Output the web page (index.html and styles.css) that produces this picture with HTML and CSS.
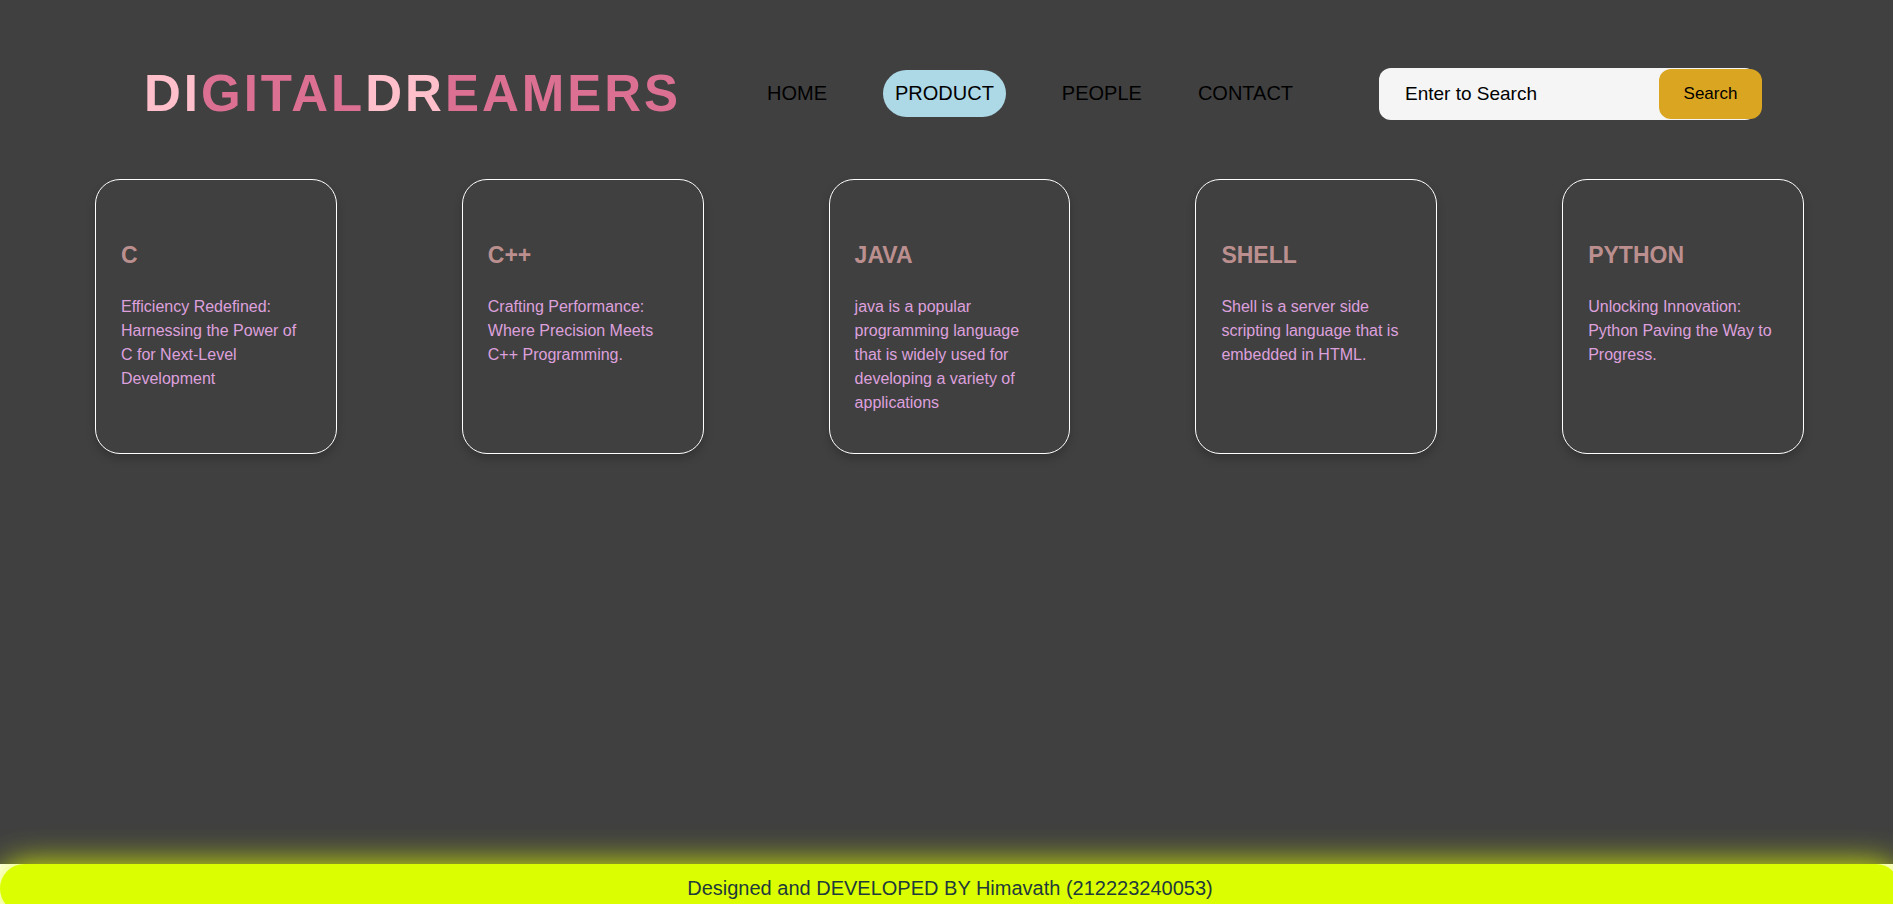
FILE: index.html
```html
<!DOCTYPE html>
<html lang="en">
<head>
<meta charset="utf-8">
<title>Digital Dreamers</title>
<link rel="stylesheet" href="styles.css">
</head>
<body>
<div class="page">
  <div class="main">
    <header class="header">
      <h1 class="logo"><span class="light">DI</span>GITAL<span class="light">DR</span>EAMERS</h1>
      <nav class="nav">
        <a href="#">HOME</a>
        <a href="#" class="active">PRODUCT</a>
        <a href="#">PEOPLE</a>
        <a href="#">CONTACT</a>
      </nav>
      <form class="search">
        <input type="text" placeholder="Enter to Search" aria-label="Search">
        <button type="button">Search</button>
      </form>
    </header>
    <main class="cards">
      <article class="card"><h2>C</h2><p>Efficiency Redefined: Harnessing the Power of C for Next-Level Development</p></article>
      <article class="card"><h2>C++</h2><p>Crafting Performance: Where Precision Meets C++ Programming.</p></article>
      <article class="card"><h2>JAVA</h2><p>java is a popular programming language that is widely used for developing a variety of applications</p></article>
      <article class="card"><h2>SHELL</h2><p>Shell is a server side scripting language that is embedded in HTML.</p></article>
      <article class="card"><h2>PYTHON</h2><p>Unlocking Innovation: Python Paving the Way to Progress.</p></article>
    </main>
  </div>
  <footer class="footer">Designed and DEVELOPED BY Himavath (212223240053)</footer>
</div>
</body>
</html>
```
FILE: styles.css
```css
* { box-sizing: border-box; }
html { overflow: hidden; }
body {
  margin: 0;
  height: 100vh;
  overflow: hidden;
  background: #fff;
  font-family: Arial, "Liberation Sans", sans-serif;
}
.page { margin-right: -7px; }
.main {
  min-height: calc(100vh - 40px);
  background: #404040;
}
.header {
  display: flex;
  align-items: center;
  justify-content: space-between;
  padding: 64px 138px 55px 144px;
}
.logo {
  margin: 0;
  font-size: 51px;
  line-height: 60px;
  letter-spacing: 3px;
  color: palevioletred;
}
.logo .light { color: pink; }
.nav {
  display: flex;
  align-items: center;
  gap: 56px;
  margin-bottom: 2px;
}
.nav a {
  color: #000;
  font-size: 20px;
  line-height: 23px;
  text-decoration: none;
}
.nav .active {
  padding: 12px;
  border-radius: 25px;
  background: lightblue;
}
.search {
  display: flex;
  align-items: center;
  width: 383px;
}
.search input {
  flex: 1;
  min-width: 0;
  height: 52px;
  margin-right: -98px;
  padding: 0 104px 0 26px;
  border: 0;
  border-radius: 12px;
  outline: 0;
  background: whitesmoke;
  font: 19px Arial, "Liberation Sans", sans-serif;
}
.search input::placeholder { color: #000; opacity: 1; }
.search button {
  position: relative;
  width: 103px;
  height: 50px;
  padding: 0;
  border: 0;
  border-radius: 12px;
  background: goldenrod;
  color: #000;
  font: 17px Arial, "Liberation Sans", sans-serif;
}
.cards {
  display: grid;
  grid-template-columns: repeat(5, 1fr);
  gap: 125px;
  margin: 0 96px 0 95px;
}
.card {
  min-height: 275px;
  padding: 60px 24px 24px 25px;
  border: 1px solid #fff;
  border-radius: 25px;
  box-shadow: 0 5px 10px rgba(0, 0, 0, 0.2);
}
.card h2 {
  margin: 0 0 25px;
  color: rosybrown;
  font-size: 23px;
  line-height: 30px;
}
.card p {
  margin: 0;
  color: plum;
  font-size: 16px;
  line-height: 24px;
}
.footer {
  padding: 12px 0;
  border-radius: 25px;
  background: #dbff00;
  box-shadow: 0 0 32px rgba(228, 255, 0, 0.95);
  color: #1f3a3a;
  font-size: 20px;
  line-height: 25px;
  text-align: center;
}
```
